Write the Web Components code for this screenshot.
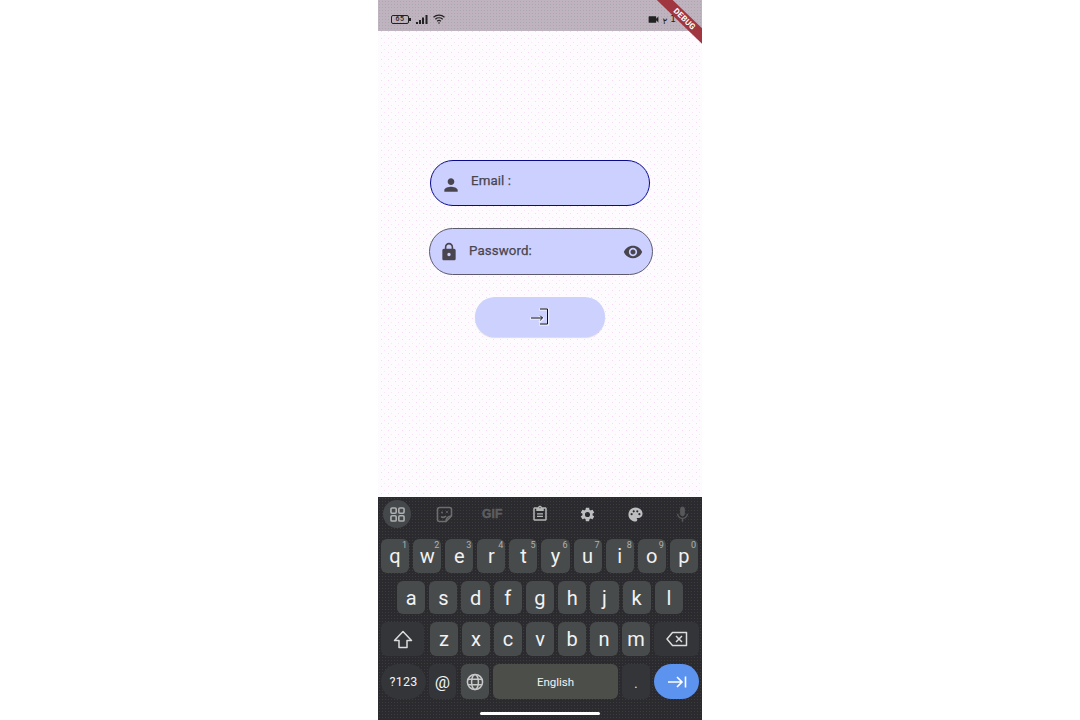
<!DOCTYPE html>
<html>
<head>
<meta charset="utf-8">
<title>Login</title>
<style>
	html, body { margin: 0; height: 100%; background: #fff; }
	body { display: flex; justify-content: center; font-family: Roboto, "Liberation Sans", sans-serif; }
</style>
</head>
<body>
<phone-shell>
	<status-bar></status-bar>
	<login-form></login-form>
	<soft-keyboard></soft-keyboard>
	<debug-ribbon></debug-ribbon>
</phone-shell>

<script>
const ICONS = {
	person: '<path d="M12 12c2.21 0 4-1.79 4-4s-1.79-4-4-4-4 1.79-4 4 1.79 4 4 4zm0 2c-2.67 0-8 1.34-8 4v2h16v-2c0-2.66-5.33-4-8-4z"/>',
	lock: '<path d="M18 8h-1V6c0-2.76-2.24-5-5-5S7 3.24 7 6v2H6c-1.1 0-2 .9-2 2v10c0 1.1.9 2 2 2h12c1.1 0 2-.9 2-2V10c0-1.1-.9-2-2-2zm-6 9c-1.1 0-2-.9-2-2s.9-2 2-2 2 .9 2 2-.9 2-2 2zm3.1-9H8.9V6c0-1.71 1.39-3.1 3.1-3.1 1.71 0 3.1 1.39 3.1 3.1v2z"/>',
	eye: '<path d="M12 4.5C7 4.5 2.73 7.61 1 12c1.73 4.39 6 7.5 11 7.5s9.27-3.11 11-7.5c-1.73-4.39-6-7.5-11-7.5zM12 17c-2.76 0-5-2.24-5-5s2.24-5 5-5 5 2.24 5 5-2.24 5-5 5zm0-8c-1.66 0-3 1.34-3 3s1.34 3 3 3 3-1.34 3-3-1.34-3-3-3z"/>',
	gear: '<path d="M19.14 12.94c.04-.3.06-.61.06-.94s-.02-.64-.07-.94l2.03-1.58a.49.49 0 0 0 .12-.61l-1.92-3.32a.49.49 0 0 0-.59-.22l-2.39.96a7 7 0 0 0-1.62-.94l-.36-2.54a.48.48 0 0 0-.48-.41h-3.84a.48.48 0 0 0-.47.41l-.36 2.54c-.59.24-1.13.57-1.62.94l-2.39-.96a.48.48 0 0 0-.59.22L2.74 8.87a.48.48 0 0 0 .12.61l2.03 1.58c-.05.3-.09.63-.09.94s.02.64.07.94l-2.03 1.58a.49.49 0 0 0-.12.61l1.92 3.32c.12.22.37.29.59.22l2.39-.96c.5.38 1.03.7 1.62.94l.36 2.54c.05.24.24.41.48.41h3.84c.24 0 .44-.17.47-.41l.36-2.54c.59-.24 1.13-.56 1.62-.94l2.39.96c.22.08.47 0 .59-.22l1.92-3.32a.48.48 0 0 0-.12-.61l-2.01-1.58zM12 15.6A3.6 3.6 0 1 1 12 8.4a3.6 3.6 0 0 1 0 7.2z"/>',
	palette: '<path d="M12 2C6.49 2 2 6.49 2 12s4.49 10 10 10c1.38 0 2.5-1.12 2.5-2.5 0-.61-.23-1.2-.64-1.67a.53.53 0 0 1 .39-.83H16c3.31 0 6-2.69 6-6 0-4.96-4.49-9-10-9zM6.5 13a1.5 1.5 0 1 1 0-3 1.5 1.5 0 0 1 0 3zm3-4a1.5 1.5 0 1 1 0-3 1.5 1.5 0 0 1 0 3zm5 0a1.5 1.5 0 1 1 0-3 1.5 1.5 0 0 1 0 3zm3 4a1.5 1.5 0 1 1 0-3 1.5 1.5 0 0 1 0 3z"/>',
	mic: '<path d="M12 14c1.66 0 3-1.34 3-3V5c0-1.66-1.34-3-3-3S9 3.34 9 5v6c0 1.66 1.34 3 3 3zm5.3-3c0 3-2.54 5.1-5.3 5.1S6.7 14 6.7 11H5c0 3.41 2.72 6.23 6 6.72V21h2v-3.28c3.28-.48 6-3.3 6-6.72h-1.7z"/>',
	clipboard: '<path d="M19 3h-4.18C14.4 1.84 13.3 1 12 1s-2.4.84-2.82 2H5c-1.1 0-2 .9-2 2v14c0 1.1.9 2 2 2h14c1.1 0 2-.9 2-2V5c0-1.1-.9-2-2-2zm-7-.25a.75.75 0 1 1 0 1.5.75.75 0 0 1 0-1.5zM19 19H5V5h2v3h10V5h2v14zM8 11h8v1.6H8zm0 3.4h8V16H8z"/>',
	video: '<path d="M17 10.5V7c0-.55-.45-1-1-1H4c-.55 0-1 .45-1 1v10c0 .55.45 1 1 1h12c.55 0 1-.45 1-1v-3.5l4 4v-11l-4 4z"/>'
};

function icon(name, size, color) {
	return `<svg width="${size}" height="${size}" viewBox="0 0 24 24" fill="${color}" style="display:block">${ICONS[name]}</svg>`;
}

class PhoneShell extends HTMLElement {
	constructor() {
		super();
		this.attachShadow({ mode: "open" });
		this.shadowRoot.innerHTML = `
			<style>
			:host {
				position: relative;
				display: flex;
				flex-direction: column;
				width: 324px;
				height: 720px;
				overflow: hidden;
				background-color: #fefbff;
				background-image: radial-gradient(#f8d8f8 0.7px, transparent 0.9px), radial-gradient(#fae2fa 0.6px, transparent 0.8px);
				background-size: 7px 7px, 7px 7px;
				background-position: 0 0, 3px 4px;
			}
			</style>
			<slot></slot>
		`;
	}
}

class StatusBar extends HTMLElement {
	constructor() {
		super();
		this.attachShadow({ mode: "open" });
		this.shadowRoot.innerHTML = `
			<style>
			:host {
				display: flex;
				align-items: center;
				flex: none;
				height: 31px;
				box-sizing: border-box;
				padding: 7px 0 0 13px;
				background-color: #bfb3bf;
				background-image: radial-gradient(#a9a9ad 0.7px, transparent 0.9px);
				background-size: 3px 3px;
				color: #222;
			}
			.battery { position: relative; width: 20px; height: 9px; margin-right: 5px; }
			.battery span {
				position: absolute;
				left: 0; top: 0;
				width: 18px; height: 9px;
				box-sizing: border-box;
				border: 1px solid #222;
				border-radius: 2px;
				font: 500 7px/7px Roboto, sans-serif;
				letter-spacing: 0.5px;
				text-align: center;
			}
			.battery i { position: absolute; right: 0; top: 3px; width: 2px; height: 3px; background: #222; }
			svg { display: block; }
			.right { display: flex; align-items: center; margin-left: auto; }
			.time { font: 500 9px/10px "DejaVu Sans", sans-serif; }
			.t1 { margin: 3px 0 0 2px; }
			.t2 { margin: 0 26px 0 3px; }
			</style>
			<div class="battery"><span>65</span><i></i></div>
			<svg width="12" height="9" viewBox="0 0 12 9" fill="#222">
				<rect x="0" y="7" width="2" height="2"/><rect x="3" y="5" width="2" height="4"/>
				<rect x="6" y="2.5" width="2" height="6.5"/><rect x="9.5" y="0" width="2" height="9"/>
			</svg>
			<svg style="margin-left:5px" width="12" height="10" viewBox="0 0 12 10" fill="none" stroke="#222" stroke-width="1.2">
				<path d="M.5 3.2C3.6.4 8.4.4 11.5 3.2"/><path d="M2.3 5.2c2.1-1.8 5.3-1.8 7.4 0"/><path d="M4.1 7.2c1.1-.9 2.7-.9 3.8 0"/>
				<circle cx="6" cy="9" r=".8" fill="#222" stroke="none"/>
			</svg>
			<div class="right">
				${icon("video", 13, "#222")}
				<span class="time t1">٢</span>
				<span class="time t2">1</span>
			</div>
		`;
	}
}

class DebugRibbon extends HTMLElement {
	constructor() {
		super();
		this.attachShadow({ mode: "open" });
		this.shadowRoot.innerHTML = `
			<style>
			:host {
				position: absolute;
				top: 16px;
				right: -30px;
				width: 90px;
				height: 11px;
				box-sizing: border-box;
				padding-right: 7px;
				transform: rotate(44deg);
				background: #a03640;
				color: #fff;
				font: 700 8px/11px Roboto, sans-serif;
				letter-spacing: 0.3px;
				text-align: center;
			}
			</style>
			DEBUG
		`;
	}
}

class InputPill extends HTMLElement {
	constructor() {
		super();
		this.attachShadow({ mode: "open" });
		this.shadowRoot.innerHTML = `
			<style>
			:host {
				display: flex;
				align-items: center;
				box-sizing: border-box;
				border: 1px solid #5c5a6c;
				border-radius: 24px;
				background: #ccd0ff;
				color: #49454f;
				font: 400 13.3px/20px Roboto, sans-serif;
				-webkit-text-stroke: .25px #49454f;
				letter-spacing: 0.1px;
			}
			.label { flex: 1; margin: 0 0 1px 10px; }
			</style>
			<slot name="lead"></slot>
			<div class="label"><slot></slot></div>
			<slot name="trail"></slot>
		`;
	}
}

class LoginForm extends HTMLElement {
	constructor() {
		super();
		this.attachShadow({ mode: "open" });
		this.shadowRoot.innerHTML = `
			<style>
			:host {
				display: flex;
				flex-direction: column;
				align-items: center;
				flex: 1;
				padding-top: 129px;
			}
			.email { width: 220px; height: 46px; padding: 0 0 4px 10px; border-color: #0a0a8c; }
			.email span[slot=lead] { transform: translateY(4px); }
			.password { width: 224px; height: 47px; margin: 22px 0 0 2px; padding: 0 9px 0 9px; }
			.ic { display: block; }
			button {
				display: flex;
				align-items: center;
				justify-content: center;
				width: 130px;
				height: 40px;
				margin-top: 22px;
				border: 0;
				padding: 0;
				border-radius: 20px;
				background: #ccd2fd;
				box-shadow: 0 1px 1px rgba(120, 120, 140, .25);
			}
			</style>
			<input-pill class="email">
				<span class="ic" slot="lead">${icon("person", 20, "#49454f")}</span>
				Email :
			</input-pill>
			<input-pill class="password">
				<span class="ic" slot="lead">${icon("lock", 20, "#49454f")}</span>
				Password:
				<span class="ic" slot="trail">${icon("eye", 20, "#49454f")}</span>
			</input-pill>
			<button>
				<svg width="20" height="18" viewBox="0 0 20 18" fill="none" stroke-linecap="square">
					<path d="M1 10.5h12M10 8.5l2.5 2.5-2.5 2.5M10.5 1.5h7.5v15H10.5" stroke="#fff" stroke-width="2.4" opacity=".6"/>
					<path d="M1.5 10h10.5M10.5 8l2 2-2 2M10.5 1h7v15h-7" stroke="#111" stroke-width="1"/>
				</svg>
			</button>
		`;
	}
}

class KbKey extends HTMLElement {
	static get observedAttributes() { return ["sup"]; }
	constructor() {
		super();
		this.attachShadow({ mode: "open" });
		this.shadowRoot.innerHTML = `
			<style>
			:host {
				position: relative;
				display: flex;
				align-items: center;
				justify-content: center;
				flex: 1 1 0;
				min-width: 0;
				border-radius: 6px;
				background: #484b4c;
				color: #f2f2f2;
				font: 400 20px/24px Roboto, sans-serif;
			}
			:host([dark]) { background: #333538; }
			:host([pill]) { border-radius: 18px; }
			sup {
				position: absolute;
				top: 1px;
				right: 2px;
				font: 400 9px/11px Roboto, sans-serif;
				color: #aeb2b2;
			}
			</style>
			<slot></slot><sup></sup>
		`;
	}
	attributeChangedCallback(name, oldValue, value) {
		this.shadowRoot.querySelector("sup").textContent = value;
	}
}

class SoftKeyboard extends HTMLElement {
	constructor() {
		super();
		this.attachShadow({ mode: "open" });
		const row1 = [..."qwertyuiop"].map((c, i) => `<kb-key sup="${(i + 1) % 10}">${c}</kb-key>`).join("");
		const row2 = [..."asdfghjkl"].map(c => `<kb-key>${c}</kb-key>`).join("");
		const row3 = [..."zxcvbnm"].map(c => `<kb-key>${c}</kb-key>`).join("");
		this.shadowRoot.innerHTML = `
			<style>
			:host {
				display: flex;
				flex-direction: column;
				flex: none;
				height: 223px;
				box-sizing: border-box;
				background-color: #2b2a2f;
				background-image: radial-gradient(#3a3d3a 0.7px, transparent 0.9px);
				background-size: 3px 3px;
				color: #f2f2f2;
			}
			.tools {
				display: flex;
				justify-content: space-between;
				align-items: center;
				height: 28px;
				margin: 3px 5px 11px;
			}
			.tool { display: flex; align-items: center; justify-content: center; width: 28px; height: 28px; border-radius: 50%; }
			.tool.on { background: #45484a; }
			.gif { font: 900 12px/14px "Liberation Sans", sans-serif; -webkit-text-stroke: .5px #5c5e60; color: #5c5e60; letter-spacing: .2px; }
			.rows { display: flex; flex-direction: column; gap: 8px; padding: 0 3px; }
			.row { display: flex; gap: 4px; }
			.r1 { height: 34px; padding-right: 1px; }
			.r2 { height: 33px; padding: 0 16px; }
			.r3 { height: 34px; }
			.r4 { height: 35px; }
			.r3 .side1 { flex: none; width: 43px; margin-right: 2px; }
			.r3 .side2 { flex: none; width: 45px; }
			.sm { font-size: 12.5px; letter-spacing: .2px; }
			.lang { font-size: 11.5px; letter-spacing: 0; }
			.at { flex: none; width: 27px; margin-left: -1px; margin-right: 1px; font-size: 17px; }
			.globe { flex: none; width: 28px; }
			.space { flex: none; width: 125px; background: #4c4e4a; }
			.dot { flex: none; width: 28px; padding-top: 5px; box-sizing: border-box; }
			.wide { flex: none; width: 45px; }
			.enter { background: #5b93ef; }
			.bar { flex: 1; display: flex; align-items: flex-end; justify-content: center; padding-bottom: 5px; }
			.bar i { display: block; width: 120px; height: 3px; border-radius: 2px; background: #fff; }
			</style>
			<div class="tools">
				<div class="tool on">
					<svg width="15" height="15" viewBox="0 0 16 16" fill="none" stroke="#aeb0b0" stroke-width="1.7">
						<rect x="1" y="1" width="5.6" height="5.6" rx="1.2"/><rect x="9.4" y="1" width="5.6" height="5.6" rx="1.2"/>
						<rect x="1" y="9.4" width="5.6" height="5.6" rx="1.2"/><rect x="9.4" y="9.4" width="5.6" height="5.6" rx="1.2"/>
					</svg>
				</div>
				<div class="tool">
					<svg width="17" height="17" viewBox="0 0 17 17" fill="none" stroke="#6c6e6e" stroke-width="1.6">
						<path d="M10 15.5H3.5a2 2 0 0 1-2-2v-10a2 2 0 0 1 2-2h10a2 2 0 0 1 2 2V10z"/>
						<path d="M5 10.5c1.6 1.4 3.5 1 5-.5M10 15.5c0-3 2-5.5 5.5-5.5" /><circle cx="6" cy="6.5" r=".9" fill="#6c6e6e" stroke="none"/><circle cx="11" cy="6" r=".9" fill="#6c6e6e" stroke="none"/>
					</svg>
				</div>
				<div class="tool"><span class="gif">GIF</span></div>
				<div class="tool">${icon("clipboard", 18, "#b4b6b6")}</div>
				<div class="tool">${icon("gear", 17, "#bcbec0")}</div>
				<div class="tool">${icon("palette", 17, "#bcbec0")}</div>
				<div class="tool">${icon("mic", 19, "#56585a")}</div>
			</div>
			<div class="rows">
				<div class="row r1">${row1}</div>
				<div class="row r2">${row2}</div>
				<div class="row r3">
					<kb-key dark class="side1">
						<svg width="20" height="19" viewBox="0 0 20 19" fill="none" stroke="#dcdcdc" stroke-width="1.5" stroke-linejoin="round"><path d="M10 1.5 1.5 10.5H6V17.5H14V10.5H18.5z"/></svg>
					</kb-key>
					${row3}
					<kb-key dark class="side2">
						<svg width="22" height="16" viewBox="0 0 22 16" fill="none" stroke="#dcdcdc" stroke-width="1.5" stroke-linejoin="round"><path d="M6.5 1.5H20.5V14.5H6.5L1 8z"/><path d="M10 5l6 6M16 5l-6 6"/></svg>
					</kb-key>
				</div>
				<div class="row r4">
					<kb-key dark pill class="wide sm">?123</kb-key>
					<kb-key dark class="at">@</kb-key>
					<kb-key class="globe">
						<svg width="18" height="18" viewBox="0 0 18 18" fill="none" stroke="#c8c8c8" stroke-width="1.5">
							<circle cx="9" cy="9" r="7.6"/><ellipse cx="9" cy="9" rx="3.4" ry="7.6"/><path d="M2 6.3h14M2 11.7h14"/>
						</svg>
					</kb-key>
					<kb-key class="space lang">English</kb-key>
					<kb-key dark class="dot sm">.</kb-key>
					<kb-key pill class="wide enter">
						<svg width="20" height="14" viewBox="0 0 20 14" fill="none" stroke="#fff" stroke-width="1.6"><path d="M1 7h14M10 2l5 5-5 5M18.5 1.5v11"/></svg>
					</kb-key>
				</div>
			</div>
			<div class="bar"><i></i></div>
		`;
	}
}

customElements.define("phone-shell", PhoneShell);
customElements.define("status-bar", StatusBar);
customElements.define("debug-ribbon", DebugRibbon);
customElements.define("input-pill", InputPill);
customElements.define("login-form", LoginForm);
customElements.define("kb-key", KbKey);
customElements.define("soft-keyboard", SoftKeyboard);
</script>
</body>
</html>
